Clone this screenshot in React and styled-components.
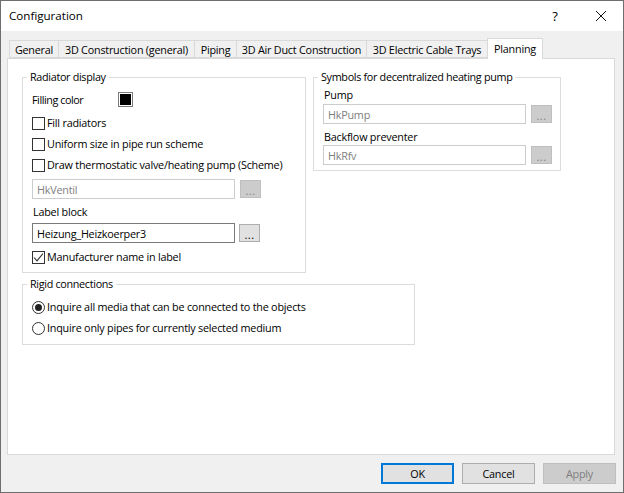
import React from "react";
import styled, { createGlobalStyle } from "styled-components";

const Global = createGlobalStyle`
  html, body { margin: 0; padding: 0; background: #f0f0f0; }
  * { box-sizing: border-box; }
`;

const Win = styled.div`
  width: 624px; height: 493px; background: #f0f0f0; border: 1px solid #6e6e6e;
  display: flex; flex-direction: column; overflow: hidden;
  font-family: "Open Sans", "Noto Sans", sans-serif; font-size: 10.8px; letter-spacing: -0.22px; color: #000;
`;
const TitleBar = styled.div`
  height: 30px; background: #fff; display: flex; align-items: center; padding: 0 0 1px 8px; flex: none;
`;
const Title = styled.div` flex: 1; font-size: 11.6px; letter-spacing: 0; `;
const Help = styled.div` width: 16px; margin-right: 32px; text-align: center; font-size: 13px; `;
const CloseBtn = styled.div` width: 12px; height: 12px; margin-right: 16px; display: flex; `;

const TabStrip = styled.div`
  height: 27px; padding-left: 8px; display: flex; align-items: flex-end; flex: none; position: relative; z-index: 1;
`;
const Tab = styled.div`
  width: ${p => p.$w}px; height: ${p => p.$active ? 21 : 18}px; flex: none;
  margin-bottom: ${p => p.$active ? -1 : 0}px;
  background: ${p => p.$active ? "#fff" : "#f0f0f0"};
  border: 1px solid #d9d9d9; border-bottom: ${p => p.$active ? "none" : "1px solid #d9d9d9"};
  border-right-width: ${p => p.$active ? 1 : 0}px;
  display: flex; justify-content: center; align-items: ${p => p.$active ? "flex-start" : "center"};
  padding-top: ${p => p.$active ? 2 : 0}px; white-space: nowrap;
`;
const Panel = styled.div`
  width: 608px; height: 397px; margin-left: 6px; background: #fff; border: 1px solid #d9d9d9;
  padding: 11px 0 0 14px; display: flex; flex-direction: column; flex: none;
`;
const TopRow = styled.div` display: flex; gap: 7px; align-items: flex-start; `;
const Group = styled.fieldset`
  margin: ${p => p.$top || 0}px 0 0 0; padding: 0 0 0 ${p => p.$pad}px; border: 1px solid #dcdcdc; min-width: 0; flex: none;
  width: ${p => p.$w}px; height: ${p => p.$h}px; display: flex; flex-direction: column; align-items: flex-start;
`;
const Legend = styled.legend`
  margin-left: -5px; padding: 0 3px; line-height: 14px; height: 14px; white-space: nowrap; letter-spacing: -0.32px;
`;
const Row = styled.div`
  display: flex; align-items: center; height: ${p => p.$h || 13}px; margin-top: ${p => p.$top || 0}px; flex: none; white-space: nowrap;
`;
const FieldLabel = styled.span` width: 86px; letter-spacing: -0.45px; `;
const OptionText = styled.span` margin-top: -2px; `;
const Caption = styled.div`
  height: 14px; line-height: 14px; margin-top: ${p => p.$top || 0}px; margin-left: 1px; flex: none; white-space: nowrap;
`;
const Swatch = styled.div`
  width: 15px; height: 15px; background: #000; border: 1px solid #7a7a7a; box-shadow: inset 0 0 0 1px #fff;
`;
const Box = styled.div`
  width: 13px; height: 13px; border: 1px solid #333; background: #fff; margin-right: 2px; flex: none; display: flex;
`;
const Radio = styled.div`
  width: 13px; height: 13px; border: 1px solid #333; border-radius: 50%; background: #fff; margin-right: 2px; flex: none;
  display: flex; align-items: center; justify-content: center;
`;
const Dot = styled.div` width: 7px; height: 7px; border-radius: 50%; background: #222; `;
const Input = styled.div`
  width: ${p => p.$w || 203}px; height: 20px; border: 1px solid ${p => p.$disabled ? "#cccccc" : "#7a7a7a"};
  background: #fff; color: ${p => p.$disabled ? "#808080" : "#000"}; padding-left: 4px; display: flex; align-items: center; flex: none;
`;
const Dots = styled.div`
  width: 21px; height: 18px; flex: none; margin-left: ${p => p.$gap}px;
  background: ${p => p.$disabled ? "#cccccc" : "#e1e1e1"}; border: 1px solid ${p => p.$disabled ? "#bfbfbf" : "#adadad"};
  color: ${p => p.$disabled ? "#838383" : "#000"}; display: flex; justify-content: center; align-items: center; padding-top: 3px; font-size: 11px;
  letter-spacing: 0.4px;
`;
const Footer = styled.div`
  display: flex; justify-content: flex-end; gap: 8px; padding: 8px 7px 0 0; flex: none;
`;
const Btn = styled.div`
  width: 73px; height: 21px; display: flex; align-items: center; justify-content: center;
  background: ${p => p.$disabled ? "#cccccc" : "#e1e1e1"};
  color: ${p => p.$disabled ? "#7f7f7f" : "#000"};
  border: ${p => p.$def ? "2px solid #0078d7" : `1px solid ${p.$disabled ? "#bfbfbf" : "#adadad"}`};
`;

const tabs = [
  ["General", 49], ["3D Construction (general)", 136], ["Piping", 42],
  ["3D Air Duct Construction", 130], ["3D Electric Cable Trays", 121],
];

const Check = ({ on, children, top }) => (
  <Row $top={top}>
    <Box>
      {on && (
        <svg width="11" height="11" viewBox="0 0 11 11">
          <path d="M1 5.5 L4 8.8 L10 1.5" fill="none" stroke="#333" strokeWidth="1.1" />
        </svg>
      )}
    </Box>
    <OptionText>{children}</OptionText>
  </Row>
);
const Opt = ({ on, children, top }) => (
  <Row $top={top}>
    <Radio>{on && <Dot />}</Radio>
    <OptionText>{children}</OptionText>
  </Row>
);

export default function App() {
  return (
    <Win>
      <Global />
      <TitleBar>
        <Title>Configuration</Title>
        <Help>?</Help>
        <CloseBtn>
          <svg width="12" height="12" viewBox="0 0 12 12">
            <path d="M1 1 L11 11 M11 1 L1 11" stroke="#111" strokeWidth="1" fill="none" />
          </svg>
        </CloseBtn>
      </TitleBar>
      <TabStrip>
        {tabs.map(([t, w]) => <Tab key={t} $w={w}>{t}</Tab>)}
        <Tab $active $w={56}>Planning</Tab>
      </TabStrip>
      <Panel>
        <TopRow>
          <Group $w={284} $h={203} $pad={9}>
            <Legend>Radiator display</Legend>
            <Row $h={15} $top={8}><FieldLabel>Filling color</FieldLabel><Swatch /></Row>
            <Check top={10}>Fill radiators</Check>
            <Check top={8}>Uniform size in pipe run scheme</Check>
            <Check top={8}>Draw thermostatic valve/heating pump (Scheme)</Check>
            <Row $h={20} $top={7}><Input $disabled>HkVentil</Input><Dots $disabled $gap={5}>...</Dots></Row>
            <Caption $top={6}>Label block</Caption>
            <Row $h={20} $top={4}><Input>Heizung_Heizkoerper3</Input><Dots $gap={4}>...</Dots></Row>
            <Check top={8} on>Manufacturer name in label</Check>
          </Group>
          <Group $w={248} $h={101} $pad={9}>
            <Legend>Symbols for decentralized heating pump</Legend>
            <Caption $top={4}>Pump</Caption>
            <Row $h={20} $top={2}><Input $disabled>HkPump</Input><Dots $disabled $gap={5}>...</Dots></Row>
            <Caption $top={6}>Backflow preventer</Caption>
            <Row $h={20} $top={1}><Input $disabled>HkRfv</Input><Dots $disabled $gap={5}>...</Dots></Row>
          </Group>
        </TopRow>
        <Group $w={393} $h={68} $top={4} $pad={9}>
          <Legend>Rigid connections</Legend>
          <Opt on top={10}>Inquire all media that can be connected to the objects</Opt>
          <Opt top={8}>Inquire only pipes for currently selected medium</Opt>
        </Group>
      </Panel>
      <Footer>
        <Btn $def>OK</Btn>
        <Btn>Cancel</Btn>
        <Btn $disabled>Apply</Btn>
      </Footer>
    </Win>
  );
}
